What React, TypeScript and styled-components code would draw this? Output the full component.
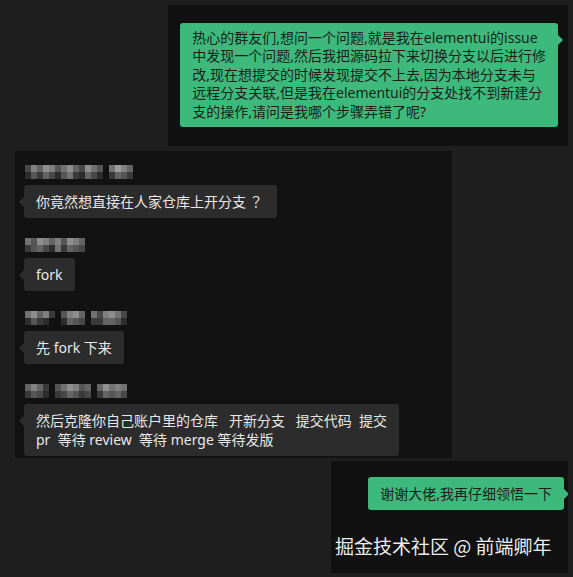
import React from 'react';
import styled, { createGlobalStyle } from 'styled-components';

const GlobalStyle = createGlobalStyle`
  html, body {
    margin: 0;
    padding: 0;
    background: #1f1f1f;
  }
  body {
    font-family: "Noto Sans", "Noto Sans CJK SC", sans-serif;
  }
`;

const Page = styled.div`
  width: 573px;
  height: 577px;
  background: #1f1f1f;
  display: flex;
  flex-direction: column;
  overflow: hidden;
`;

const Shot = styled.section<{ $top: number; $left: number; $width: number; $height: number; $bg?: string }>`
  margin-top: ${p => p.$top}px;
  margin-left: ${p => p.$left}px;
  width: ${p => p.$width}px;
  height: ${p => p.$height}px;
  background: ${p => p.$bg || '#111111'};
  box-sizing: border-box;
  display: flex;
  flex-direction: column;
  flex-shrink: 0;
  overflow: hidden;
`;

const OutgoingShot = styled(Shot)`
  align-items: flex-end;
  padding: 18px 10px 0 12px;
`;

const ThreadShot = styled(Shot)`
  padding: 14px 0 0 9px;
  gap: 20px;
`;

const ReplyShot = styled(Shot)`
  padding: 16px 4px 0 4px;
`;

const Bubble = styled.div<{ $mine?: boolean; $lh?: number; $py?: number }>`
  position: relative;
  align-self: ${p => (p.$mine ? 'flex-end' : 'flex-start')};
  background: ${p => (p.$mine ? '#3dba7b' : '#2c2c2c')};
  color: ${p => (p.$mine ? '#1c1f1c' : '#e8e8e8')};
  font-size: 14px;
  line-height: ${p => p.$lh || 19}px;
  padding: ${p => p.$py ?? 7}px 12px;
  border-radius: 3px;
  white-space: pre;

  &::after {
    content: '';
    position: absolute;
    top: 12px;
    border: 5px solid transparent;
    ${p =>
      p.$mine
        ? 'left: 100%; border-left-color: #3dba7b; border-right-width: 0;'
        : 'right: 100%; border-right-color: #2c2c2c; border-left-width: 0;'}
  }
`;

const FullPunct = styled.span`
  font-family: "Noto Sans CJK TC", sans-serif;
  margin-left: 3px;
  margin-right: 2px;
`;

const Group = styled.div`
  display: flex;
  flex-direction: column;
  align-items: flex-start;
  gap: 6px;
`;

const Mosaic = styled.div<{ $cols: number }>`
  display: grid;
  grid-template-columns: repeat(${p => p.$cols}, 6px);
  grid-auto-rows: 7px;
  margin-left: 1px;
  filter: blur(0.6px);
`;

const Cell = styled.span`
  display: block;
`;

const Watermark = styled.div`
  margin-top: 25px;
  font-family: "Noto Sans CJK SC", sans-serif;
  font-size: 19px;
  line-height: 22px;
  color: #ededed;
  white-space: nowrap;
  text-shadow: 0 0 1px rgba(0, 0, 0, 0.6);
`;

const BlurName: React.FC<{ rows: string[] }> = ({ rows }) => (
  <Mosaic $cols={rows[0].length}>
    {rows.join('').split('').map((d, i) => {
      const n = Number(d);
      const v = 30 + n * 14;
      return (
        <Cell key={i} style={{ background: n === 0 ? 'transparent' : `rgb(${v},${v},${v})` }} />
      );
    })}
  </Mosaic>
);

const question = [
  '热心的群友们,想问一个问题,就是我在elementui的issue',
  '中发现一个问题,然后我把源码拉下来切换分支以后进行修',
  '改,现在想提交的时候发现提交不上去,因为本地分支未与',
  '远程分支关联,但是我在elementui的分支处找不到新建分',
  '支的操作,请问是我哪个步骤弄错了呢?',
].join('\n');

const thread: { name: string[]; text: React.ReactNode }[] = [
  {
    name: ['375874685386406975', '142531462153102542'],
    text: (
      <>
        你竟然想直接在人家仓库上开分支<FullPunct>？</FullPunct>
      </>
    ),
  },
  {
    name: ['6487574875', '2453162543'],
    text: 'fork',
  },
  {
    name: ['685720478506378630', '142100154302255410'],
    text: '先 fork 下来',
  },
  {
    name: ['575204687450586760', '243102354230254530'],
    text: '然后克隆你自己账户里的仓库   开新分支   提交代码  提交\npr  等待 review  等待 merge 等待发版',
  },
];

export default function App() {
  return (
    <>
      <GlobalStyle />
      <Page>
        <OutgoingShot $top={5} $left={168} $width={400} $height={141}>
          <Bubble $mine $lh={18.4} $py={6}>
            {question}
          </Bubble>
        </OutgoingShot>

        <ThreadShot $top={5} $left={15} $width={437} $height={307} $bg="#121212">
          {thread.map((m, i) => (
            <Group key={i}>
              <BlurName rows={m.name} />
              <Bubble>{m.text}</Bubble>
            </Group>
          ))}
        </ThreadShot>

        <ReplyShot $top={3} $left={331} $width={237} $height={112}>
          <Bubble $mine>谢谢大佬,我再仔细领悟一下</Bubble>
          <Watermark>掘金技术社区 @ 前端卿年</Watermark>
        </ReplyShot>
      </Page>
    </>
  );
}
